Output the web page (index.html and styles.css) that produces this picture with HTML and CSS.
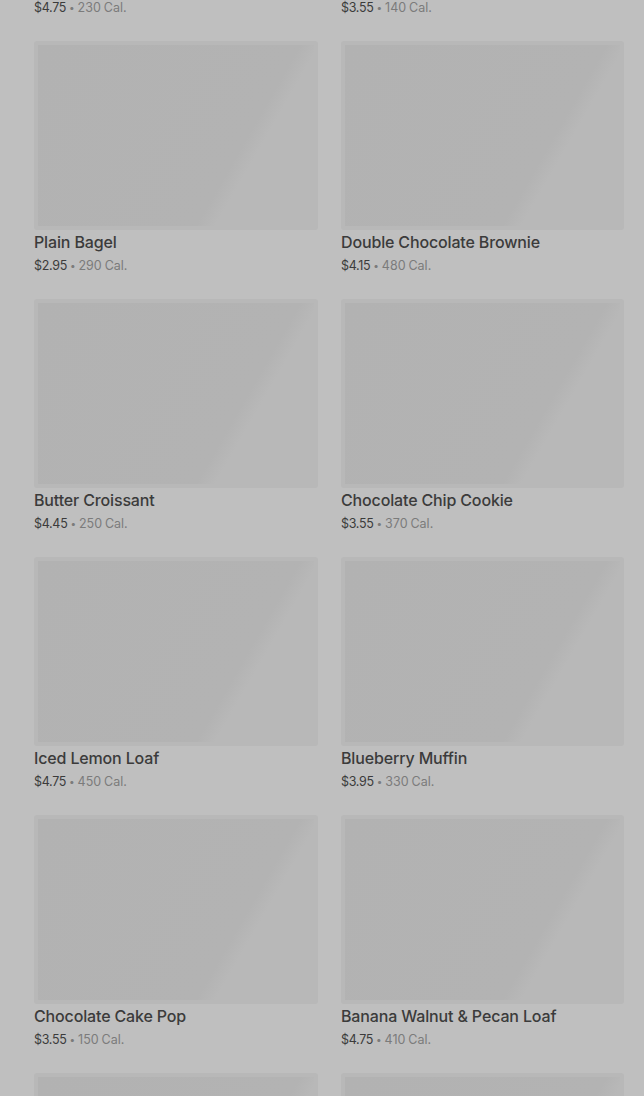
FILE: index.html
```html
<!DOCTYPE html>
<html lang="en">
<head>
    <meta charset="UTF-8">
    <meta name="viewport" content="width=device-width, initial-scale=1.0">
    <title>Bakery</title>
    <link rel="stylesheet" href="styles.css">
</head>
<body>
    <div class="menu">
        <div class="grid">
            <div class="item">
                <div class="thumb"></div>
                <div class="name">Cheese Danish</div>
                <div class="meta"><span class="price">$4.75</span> <span class="dot">•</span> 230 Cal.</div>
            </div>
            <div class="item">
                <div class="thumb"></div>
                <div class="name">Vanilla Bean Scone</div>
                <div class="meta"><span class="price">$3.55</span> <span class="dot">•</span> 140 Cal.</div>
            </div>
            <div class="item">
                <div class="thumb"></div>
                <div class="name">Plain Bagel</div>
                <div class="meta"><span class="price">$2.95</span> <span class="dot">•</span> 290 Cal.</div>
            </div>
            <div class="item">
                <div class="thumb"></div>
                <div class="name">Double Chocolate Brownie</div>
                <div class="meta"><span class="price">$4.15</span> <span class="dot">•</span> 480 Cal.</div>
            </div>
            <div class="item">
                <div class="thumb"></div>
                <div class="name">Butter Croissant</div>
                <div class="meta"><span class="price">$4.45</span> <span class="dot">•</span> 250 Cal.</div>
            </div>
            <div class="item">
                <div class="thumb"></div>
                <div class="name">Chocolate Chip Cookie</div>
                <div class="meta"><span class="price">$3.55</span> <span class="dot">•</span> 370 Cal.</div>
            </div>
            <div class="item">
                <div class="thumb"></div>
                <div class="name">Iced Lemon Loaf</div>
                <div class="meta"><span class="price">$4.75</span> <span class="dot">•</span> 450 Cal.</div>
            </div>
            <div class="item">
                <div class="thumb"></div>
                <div class="name">Blueberry Muffin</div>
                <div class="meta"><span class="price">$3.95</span> <span class="dot">•</span> 330 Cal.</div>
            </div>
            <div class="item">
                <div class="thumb"></div>
                <div class="name">Chocolate Cake Pop</div>
                <div class="meta"><span class="price">$3.55</span> <span class="dot">•</span> 150 Cal.</div>
            </div>
            <div class="item">
                <div class="thumb"></div>
                <div class="name">Banana Walnut &amp; Pecan Loaf</div>
                <div class="meta"><span class="price">$4.75</span> <span class="dot">•</span> 410 Cal.</div>
            </div>
            <div class="item">
                <div class="thumb"></div>
                <div class="name">Birthday Cake Pop</div>
                <div class="meta"><span class="price">$3.55</span> <span class="dot">•</span> 160 Cal.</div>
            </div>
            <div class="item">
                <div class="thumb"></div>
                <div class="name">Coffee Cake</div>
                <div class="meta"><span class="price">$3.95</span> <span class="dot">•</span> 390 Cal.</div>
            </div>
        </div>
    </div>
</body>
</html>
```

FILE: styles.css
```css
* {
    margin: 0;
    padding: 0;
    box-sizing: border-box;
}

html,
body {
    background: #bfbfbf;
    overflow: hidden;
}

body {
    font-family: 'Inter', 'Liberation Sans', sans-serif;
    height: 1096px;
}

.menu {
    padding: 0 20px 0 34px;
}

/* page is scrolled: first row sits above the fold */
.grid {
    display: grid;
    grid-template-columns: 284px 283px;
    column-gap: 23px;
    row-gap: 23px;
    margin-top: -217px;
}

.thumb {
    height: 189px;
    border-radius: 3px;
    border: 4px solid #b8b8b8;
    background: linear-gradient(120deg, #b2b2b2 0%, #b3b3b3 69%, #b8b8b8 74%, #b8b8b8 100%);
}

.name {
    margin-top: 2px;
    height: 20px;
    font-size: 16px;
    line-height: 20px;
    font-weight: 500;
    color: #3b3b3b;
    letter-spacing: -0.15px;
}

.meta {
    margin-top: 4px;
    height: 20px;
    font-size: 12.5px;
    line-height: 20px;
    color: #7b7b7b;
    word-spacing: -0.6px;
}

.price {
    color: #3b3b3b;
    letter-spacing: -0.3px;
}

.dot {
    font-size: 10px;
    line-height: 1;
    vertical-align: 1px;
}
```
